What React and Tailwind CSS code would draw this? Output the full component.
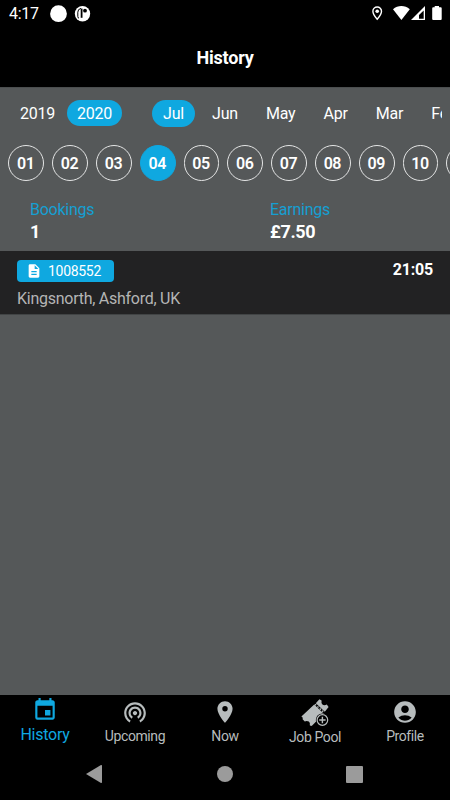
import { useState } from "react";
import {
  MdAccountCircle,
  MdDescription,
  MdEvent,
  MdPlace,
  MdWifiTethering,
} from "react-icons/md";

const years = ["2019", "2020"];

const months = [
  { label: "Jul", margin: "ml-0" },
  { label: "Jun", margin: "ml-[17px]" },
  { label: "May", margin: "ml-[28px]" },
  { label: "Apr", margin: "ml-[28px]" },
  { label: "Mar", margin: "ml-[28px]" },
  { label: "Feb", margin: "ml-[28px]" },
];

const days = ["01", "02", "03", "04", "05", "06", "07", "08", "09", "10", "11"];

function JobPoolIcon() {
  return (
    <svg width="28" height="28" viewBox="0 0 28 28" className="block">
      <path
        d="M0.4 17.6L13.2 5.6L22.8 14.8L11.2 26.6Q10 27.4 8.8 26.2Q9.4 23.6 7.8 22.6Q6 21.6 3.8 22.4L1.6 20.2Q2.6 18.8 0.4 17.6z"
        fill="currentColor"
      />
      <path
        d="M14.8 4.3L18.4 0.2L20.6 1.6Q20 4.2 21.4 5.4Q23 6.8 25.8 5.6L27.6 8L23.8 12.8z"
        fill="currentColor"
      />
      <path d="M14 5.2L23.4 14" stroke="currentColor" strokeWidth="1.4" strokeDasharray="1.6 1.6" />
      <circle cx="21.4" cy="21" r="6.6" fill="#000" />
      <circle cx="21.4" cy="21" r="5.3" fill="none" stroke="currentColor" strokeWidth="1.2" />
      <path d="M21.4 17.8v6.4M18.2 21h6.4" stroke="currentColor" strokeWidth="1.4" />
    </svg>
  );
}

const tabs = [
  { title: "Upcoming", icon: MdWifiTethering },
  { title: "Now", icon: MdPlace },
  { title: "Job Pool", icon: null },
  { title: "Profile", icon: MdAccountCircle },
];

function StatusBar() {
  return (
    <div className="flex h-[27px] items-center text-white">
      <span className="ml-[9px] w-[41px] pt-px text-[16px] leading-[26px] tracking-[-0.3px]">
        4:17
      </span>
      <svg width="42" height="20" viewBox="0 0 42 20">
        <circle cx="8.5" cy="9.7" r="8.4" fill="#fff" />
        <circle cx="32.5" cy="9.7" r="7.7" fill="#fff" />
        <path
          d="M31 4.4Q27.8 5 27.8 8.2v4.4q0 1.5 1.2 1.5"
          fill="none"
          stroke="#000"
          strokeWidth="1"
        />
        <path d="M31.6 4.6v9.2" stroke="#000" strokeWidth="1.8" />
        <circle cx="35" cy="6.7" r="1.9" fill="#000" />
      </svg>
      <svg width="72" height="20" viewBox="370 4 72 20" className="mr-[8px] ml-auto">
        <path
          d="M377.2 7a4.3 4.3 0 0 0-4.3 4.3c0 3.2 4.3 8 4.3 8s4.3-4.8 4.3-8a4.3 4.3 0 0 0-4.3-4.3z"
          fill="none"
          stroke="#fff"
          strokeWidth="1.4"
        />
        <circle cx="377.2" cy="11.2" r="1.8" fill="#fff" />
        <path d="M393 9.2C397.8 5 405 5 409.8 9.2L401.4 20z" fill="#fff" />
        <path d="M411 20L425 6v14z" fill="#fff" />
        <path d="M423.7 10.6v8.1H419v-3.8z" fill="#000" />
        <path
          d="M434.7 6h4.3v1.3h1.7a1 1 0 0 1 1 1V19a1 1 0 0 1-1 1H433.200a1 1 0 0 1-1-1V8.300a1 1 0 0 1 1-1h1.5z"
          fill="#fff"
        />
      </svg>
    </div>
  );
}

function App() {
  const [year, setYear] = useState("2020");
  const [month, setMonth] = useState("Jul");
  const [day, setDay] = useState("04");

  return (
    <div className="flex h-[800px] w-[450px] flex-col overflow-hidden bg-[#555859] font-['Roboto',sans-serif] text-white">
      <header className="h-[87px] shrink-0 bg-black">
        <StatusBar />
        <h1 className="pt-[17px] text-center text-[18px] leading-7 font-bold tracking-[-0.2px]">
          History
        </h1>
      </header>

      <div className="flex h-[51px] items-center border-t border-[#4b4e4f] px-2 text-[16px] tracking-[-0.2px]">
        {years.map((item) => (
          <button
            key={item}
            onClick={() => setYear(item)}
            className={`h-[26px] w-[55px] shrink-0 rounded-full pt-px ${
              item === year ? "bg-[#0fa8e0]" : ""
            } ${item === "2019" ? "mr-[2px] ml-[2px]" : ""}`}
          >
            {item}
          </button>
        ))}
        <div className="ml-[30px] flex min-w-0 flex-1 overflow-hidden">
          {months.map((item) => (
            <button
              key={item.label}
              onClick={() => setMonth(item.label)}
              className={`h-[27px] shrink-0 pt-px text-center ${item.margin} ${
                item.label === month ? "w-[43px] rounded-full bg-[#0fa8e0]" : ""
              }`}
            >
              {item.label}
            </button>
          ))}
        </div>
      </div>

      <div className="flex h-[50px] gap-2 overflow-hidden pt-[7px] pl-[8.4px]">
        {days.map((item) => (
          <button
            key={item}
            onClick={() => setDay(item)}
            className={`h-[36px] w-[35.8px] shrink-0 rounded-full border pt-px pr-px text-[16px] font-semibold tracking-[-0.4px] ${
              item === day ? "border-[#0fa8e0] bg-[#0fa8e0]" : "border-[#e4e5e5]"
            }`}
          >
            {item}
          </button>
        ))}
      </div>

      <div className="flex h-[63px] px-[30px] pt-3">
        <div className="w-[240px]">
          <p className="text-[16px] leading-[20px] tracking-[-0.25px] text-[#159fd2]">Bookings</p>
          <p className="text-[18px] leading-[23px] font-bold tracking-[-0.3px]">1</p>
        </div>
        <div>
          <p className="text-[16px] leading-[20px] tracking-[-0.25px] text-[#159fd2]">Earnings</p>
          <p className="text-[18px] leading-[23px] font-bold tracking-[-0.3px]">£7.50</p>
        </div>
      </div>

      <div className="h-[64px] border-b border-[#414445] bg-[#222223] px-[17px] pt-[9px]">
        <div className="flex justify-between">
          <div className="flex h-[22px] w-[97px] items-center rounded-[4px] bg-[#0fa8e0] pl-[9px] text-[14px] tracking-[-0.3px]">
            <MdDescription className="h-4 w-4" />
            <span className="ml-[6px] pt-px">1008552</span>
          </div>
          <span className="text-[16px] leading-[19px] font-bold tracking-[-0.2px]">21:05</span>
        </div>
        <p className="pt-[7px] text-[16px] leading-[20px] tracking-[-0.26px] text-[#b4b5b5]">
          Kingsnorth, Ashford, UK
        </p>
      </div>

      <main className="flex-1" />

      <footer className="h-[105px] shrink-0 bg-black">
        <nav className="flex h-[54px] text-[14px] tracking-[-0.4px] text-[#b7bcbd]">
          <button className="flex w-[90px] flex-col items-center pt-[2px] text-[16px] tracking-[-0.25px] text-[#0fa8e0]">
            <MdEvent className="h-[26px] w-[26px]" />
            <span className="pt-px leading-[22px]">History</span>
          </button>
          {tabs.map((tab) => (
            <button key={tab.title} className="flex w-[90px] flex-col items-center pt-[4px]">
              {tab.icon ? <tab.icon className="h-[26px] w-[26px]" /> : <JobPoolIcon />}
              <span className={tab.icon ? "leading-[22px]" : "leading-[21px]"}>{tab.title}</span>
            </button>
          ))}
        </nav>
        <div className="flex h-[50px] items-center justify-between pr-[87px] pl-[85px]">
          <svg width="18" height="20" viewBox="0 0 18 20" fill="#9b9b9b">
            <path d="M1 10L16 1Q17 .6 17 2V18Q17 19.4 16 19z" />
          </svg>
          <div className="h-4 w-4 rounded-full bg-[#9b9b9b]" />
          <div className="h-[17px] w-[17px] rounded-[1px] bg-[#9b9b9b]" />
        </div>
      </footer>
    </div>
  );
}

export default App;
